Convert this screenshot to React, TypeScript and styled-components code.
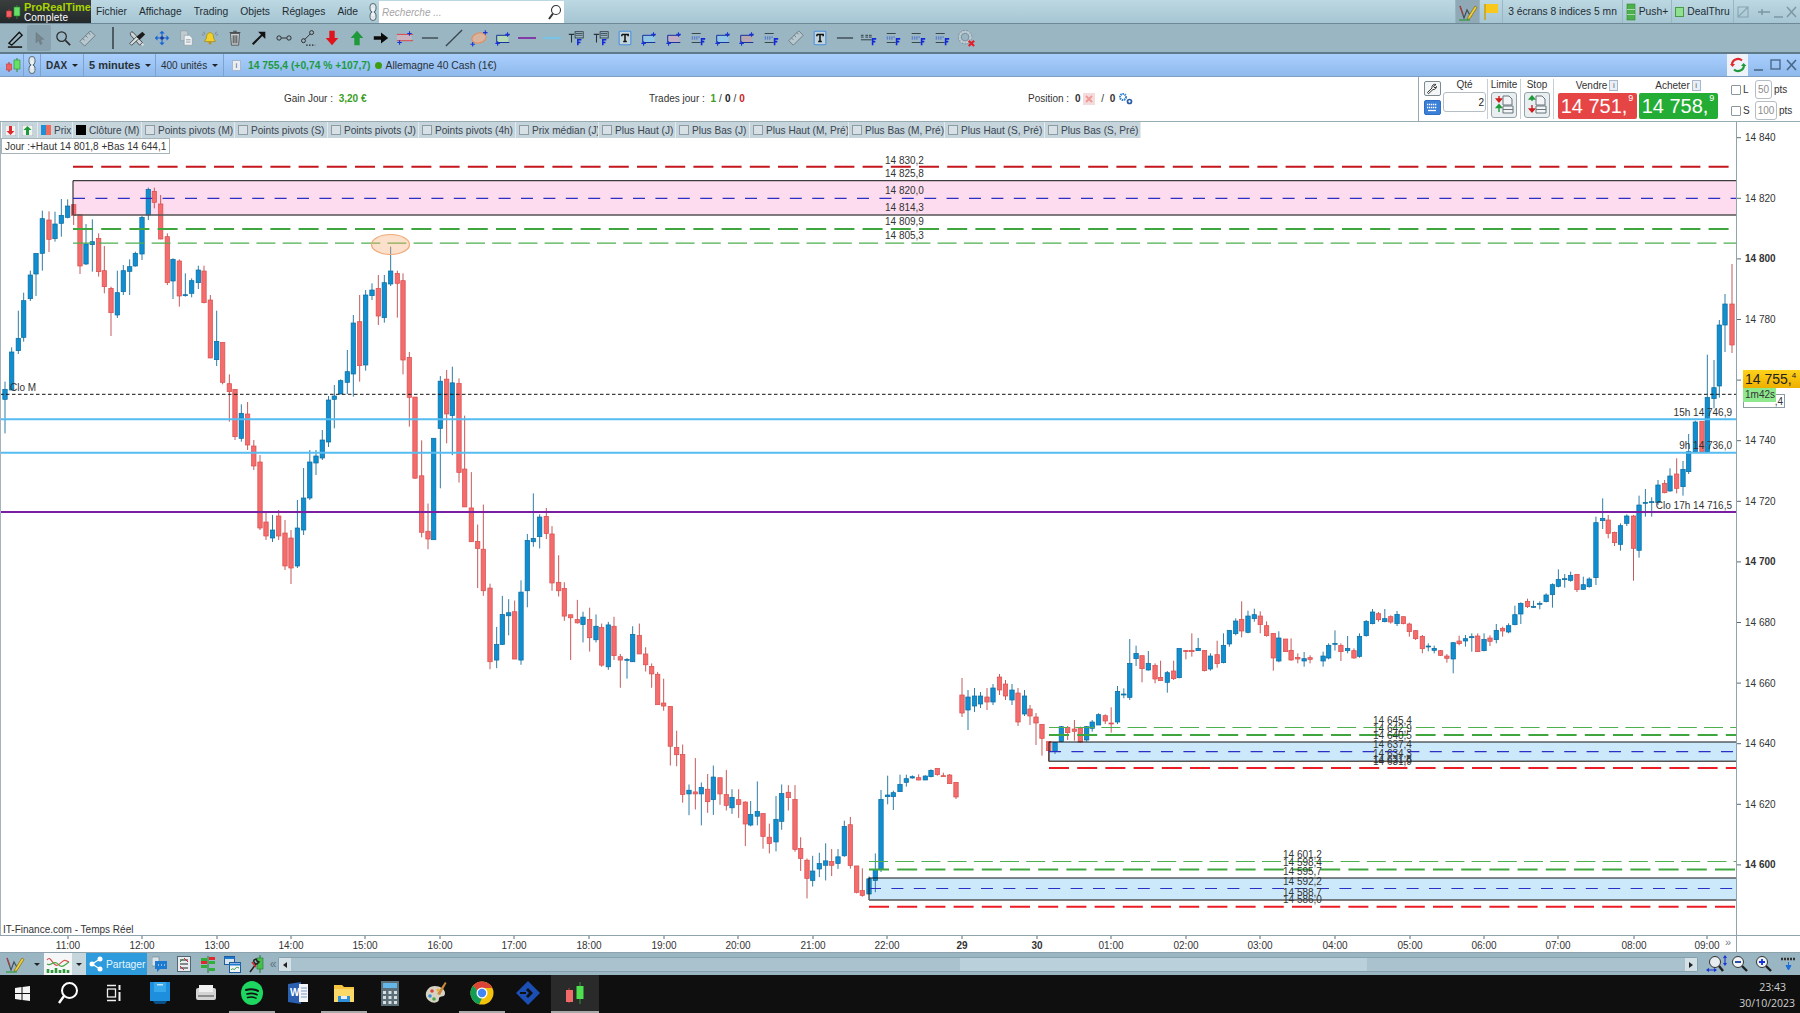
import React from "react";
import styled, { createGlobalStyle } from "styled-components";

const GlobalStyle = createGlobalStyle`
  html, body { margin: 0; padding: 0; background: #fff; }
  body { font-family: "Liberation Sans", Arial, sans-serif; font-size: 10px; color: #333; overflow: hidden; }
`;

/* ---------- candles: [x, bodyTop, bodyBottom, high, low, up] ---------- */
type Row = [number, number, number, number, number, number];
type Candle = { x: number; top: number; bottom: number; high: number; low: number; up: boolean };

const segment = (ox: number, oy: number, sx: number, sy: number, rows: Row[]): Candle[] =>
  rows.map(([x, t, b, h, l, u]) => ({
    x: ox + x / sx,
    top: oy + t / sy,
    bottom: oy + b / sy,
    high: oy + h / sy,
    low: oy + l / sy,
    up: u === 1,
  }));

const candles: Candle[] = [
  ...segment(0, 140, 3, 3, [
    [15, 748, 778, 725, 880, 1], [35, 636, 750, 622, 750, 1], [55, 595, 632, 512, 642, 1], [71, 482, 592, 458, 605, 1],
    [91, 405, 476, 392, 483, 1], [108, 340, 402, 340, 468, 1], [127, 236, 340, 212, 392, 1], [147, 240, 298, 214, 336, 0],
    [165, 252, 296, 215, 305, 1], [184, 226, 250, 177, 290, 1], [203, 198, 232, 178, 235, 1], [221, 194, 226, 194, 255, 0],
    [240, 224, 378, 224, 402, 0], [258, 312, 372, 252, 375, 1], [277, 305, 314, 238, 395, 1], [296, 295, 395, 280, 410, 0],
    [313, 392, 440, 318, 460, 0], [333, 445, 518, 440, 588, 0], [352, 458, 525, 392, 534, 1], [370, 392, 455, 375, 465, 1],
    [389, 380, 394, 358, 465, 1], [406, 340, 378, 335, 380, 1], [426, 232, 342, 228, 360, 1], [445, 148, 225, 143, 240, 1],
    [463, 154, 187, 143, 205, 0], [482, 192, 297, 165, 298, 0], [502, 290, 428, 280, 435, 0], [519, 358, 423, 355, 477, 1],
    [538, 363, 468, 358, 500, 0], [556, 464, 466, 400, 470, 1], [575, 422, 460, 415, 472, 1], [595, 390, 428, 377, 447, 1],
    [612, 393, 488, 377, 490, 0], [631, 480, 654, 465, 654, 0], [650, 604, 659, 512, 678, 1], [668, 607, 727, 607, 733, 0],
    [688, 731, 755, 703, 845, 0], [705, 748, 890, 748, 900, 0], [724, 820, 895, 793, 905, 1],
  ]),
  ...segment(0, 0, 1, 1, [
    [247.6, 414, 445, 402, 450, 0], [253.8, 446, 466, 440, 470, 0], [260, 462, 528, 455, 530, 0], [266, 522, 536, 512, 540, 0],
    [272.5, 530, 538, 515, 542, 1], [278.7, 516, 536, 510, 540, 0], [285, 533, 566, 520, 570, 0], [291, 538, 568, 530, 584, 0],
    [297.4, 528, 566, 500, 568, 1], [303.6, 498, 530, 468, 535, 1], [309.8, 462, 498, 450, 500, 1], [316, 456, 463, 450, 475, 1],
    [322.3, 440, 458, 430, 460, 1], [328.5, 400, 442, 396, 447, 1],
  ]),
  ...segment(0, 140, 3, 3, [
    [1003, 768, 778, 735, 865, 1], [1022, 722, 762, 718, 762, 1], [1042, 695, 727, 630, 762, 1], [1060, 549, 702, 525, 770, 1],
    [1079, 545, 677, 465, 725, 0], [1097, 465, 675, 450, 692, 1], [1116, 450, 467, 430, 480, 1], [1135, 445, 528, 405, 555, 0],
    [1153, 428, 533, 405, 548, 1], [1172, 393, 432, 320, 438, 1], [1192, 400, 430, 392, 533, 0], [1209, 422, 660, 400, 703, 0],
    [1228, 652, 772, 636, 860, 0],
  ]),
  ...segment(400, 370, 3, 2.958, [
    [45, 80, 320, 80, 322, 0], [65, 313, 480, 208, 495, 0], [84, 477, 500, 395, 530, 0], [101, 202, 502, 202, 502, 1],
    [121, 33, 173, 18, 350, 1], [140, 27, 130, 0, 217, 0], [157, 38, 135, -10, 252, 1], [177, 40, 303, 25, 333, 0],
    [194, 293, 405, 135, 405, 0], [214, 408, 508, 302, 508, 0], [233, 507, 528, 457, 645, 0], [250, 530, 653, 398, 668, 0],
    [270, 645, 863, 632, 885, 0], [290, 812, 858, 760, 882, 1], [307, 723, 812, 668, 812, 1], [326, 718, 727, 678, 785, 1],
    [344, 715, 855, 682, 855, 0], [363, 657, 858, 622, 872, 1], [382, 504, 653, 485, 702, 1], [400, 498, 508, 365, 523, 1],
    [419, 435, 493, 427, 528, 1], [439, 433, 484, 408, 500, 0], [456, 485, 630, 462, 653, 0], [476, 628, 653, 548, 670, 0],
    [493, 646, 728, 628, 742, 0], [512, 724, 733, 724, 858, 0], [532, 738, 748, 680, 750, 0], [549, 731, 753, 715, 806, 1],
    [569, 738, 792, 703, 833, 0], [588, 758, 798, 723, 806, 1], [605, 762, 873, 750, 878, 0], [625, 754, 878, 745, 887, 1],
    [642, 758, 845, 730, 858, 0], [661, 848, 858, 840, 940, 0], [681, 856, 858, 852, 913, 1], [698, 782, 863, 758, 863, 1],
    [718, 785, 840, 750, 840, 0], [737, 840, 872, 820, 892, 0], [755, 877, 899, 868, 940, 0], [773, 900, 990, 893, 990, 0],
    [791, 985, 994, 913, 1008, 0], [811, 995, 1113, 995, 1170, 0], [830, 1117, 1138, 1067, 1172, 0], [848, 1137, 1256, 1108, 1280, 0],
    [867, 1243, 1254, 1226, 1317, 1], [886, 1248, 1254, 1148, 1300, 0], [904, 1235, 1254, 1220, 1347, 1], [923, 1240, 1277, 1195, 1310, 0],
    [940, 1204, 1271, 1170, 1316, 1], [960, 1206, 1254, 1206, 1286, 0], [979, 1256, 1288, 1183, 1303, 0], [996, 1264, 1295, 1240, 1313, 1],
    [1016, 1271, 1285, 1240, 1325, 0], [1036, 1278, 1343, 1276, 1408, 0], [1052, 1315, 1346, 1275, 1350, 1], [1072, 1306, 1320, 1217, 1347, 1],
    [1089, 1312, 1380, 1312, 1416, 0], [1108, 1382, 1401, 1342, 1430, 0], [1128, 1329, 1396, 1260, 1424, 1], [1145, 1253, 1335, 1226, 1360, 1],
    [1165, 1249, 1265, 1228, 1303, 0], [1185, 1270, 1418, 1228, 1425, 0], [1202, 1415, 1445, 1382, 1482, 0], [1221, 1450, 1504, 1445, 1563, 0],
    [1238, 1482, 1510, 1437, 1528, 1], [1258, 1460, 1476, 1428, 1500, 1], [1277, 1452, 1465, 1400, 1510, 1], [1295, 1454, 1465, 1417, 1497, 0],
    [1314, 1440, 1460, 1417, 1476, 1], [1333, 1350, 1437, 1333, 1440, 1], [1351, 1345, 1466, 1322, 1475, 0], [1370, 1467, 1545, 1467, 1548, 0],
    [1387, 1540, 1554, 1474, 1558, 0], [1407, 1505, 1550, 1498, 1550, 1], [1426, 1478, 1510, 1430, 1545, 1],
  ]),
  ...segment(820, 760, 3, 3, [
    [183, 118, 328, 90, 336, 1], [203, 105, 110, 47, 133, 1], [220, 98, 110, 92, 150, 1], [240, 73, 95, 44, 95, 1], [259, 56, 67, 44, 80, 1],
    [277, 50, 54, 46, 56, 1], [296, 53, 60, 43, 61, 0], [316, 48, 60, 46, 60, 1], [333, 31, 50, 28, 52, 1],
    [352, 25, 44, 25, 47, 0], [370, 47, 49, 38, 49, 0], [389, 45, 71, 42, 71, 0], [408, 67, 111, 67, 117, 0],
  ]),
  ...segment(0, 0, 1, 1, [
    [962, 695, 713, 678, 717, 0], [968, 697, 710, 690, 730, 1], [974.5, 696, 706, 688, 712, 1], [980.5, 696, 704, 692, 708, 1],
    [987, 697, 702, 688, 710, 0], [993, 688, 702, 684, 705, 1], [999.5, 677, 690, 674, 695, 0], [1005.5, 684, 696, 680, 700, 0],
    [1012, 690, 700, 684, 705, 1], [1018, 693, 722, 688, 726, 0], [1024.5, 696, 714, 690, 716, 1], [1030, 709, 716, 705, 725, 0],
    [1036, 717, 723, 713, 745, 0],
  ]),
  ...segment(1040, 480, 2.529, 3, [
    [5, 733, 775, 733, 827, 0], [22, 785, 812, 785, 845, 0], [38, 788, 815, 788, 822, 1], [54, 740, 784, 738, 786, 1],
    [70, 742, 758, 738, 780, 0], [87, 747, 754, 720, 782, 0], [102, 744, 786, 740, 788, 0], [118, 740, 780, 738, 785, 1],
    [132, 726, 745, 720, 755, 1], [148, 704, 735, 700, 735, 1], [165, 707, 723, 703, 732, 0], [180, 729, 731, 682, 758, 0],
    [196, 634, 726, 618, 732, 1], [212, 642, 644, 625, 655, 1], [227, 550, 652, 477, 660, 1], [243, 520, 536, 497, 558, 1],
    [258, 527, 566, 527, 607, 0], [274, 550, 570, 513, 572, 1], [291, 556, 597, 550, 610, 0], [305, 592, 602, 542, 602, 0],
    [322, 578, 607, 573, 638, 1], [338, 573, 596, 542, 600, 0], [352, 505, 593, 505, 595, 1], [369, 511, 515, 511, 538, 0],
    [384, 511, 515, 460, 530, 0], [400, 505, 512, 474, 513, 1], [416, 511, 572, 511, 574, 0], [431, 528, 567, 520, 572, 1],
    [448, 524, 551, 482, 563, 0], [464, 496, 548, 460, 550, 1], [479, 451, 492, 450, 500, 1], [495, 423, 461, 415, 466, 1],
    [510, 418, 453, 364, 472, 0], [526, 408, 457, 392, 460, 1], [542, 404, 416, 386, 425, 1], [557, 408, 434, 394, 460, 0],
    [573, 437, 467, 424, 470, 0], [590, 460, 534, 460, 572, 0], [604, 474, 543, 454, 547, 1], [621, 477, 515, 477, 515, 0],
    [635, 511, 540, 475, 542, 0], [652, 532, 537, 520, 550, 0], [668, 536, 543, 516, 560, 1], [683, 533, 538, 526, 550, 0],
    [716, 528, 543, 515, 560, 1], [730, 496, 534, 490, 538, 1], [746, 490, 492, 451, 512, 1], [761, 496, 515, 490, 543, 0],
    [778, 505, 512, 468, 520, 1], [794, 512, 534, 505, 536, 0], [808, 469, 529, 460, 533, 1], [825, 424, 467, 420, 470, 1],
    [841, 396, 431, 387, 433, 1], [856, 401, 419, 396, 425, 0], [872, 416, 425, 387, 427, 1], [887, 410, 426, 406, 431, 0],
    [903, 403, 431, 393, 438, 1], [919, 410, 431, 410, 433, 0], [934, 432, 455, 428, 470, 0], [950, 452, 476, 450, 480, 0],
    [967, 469, 506, 465, 520, 0], [982, 498, 500, 490, 514, 1], [997, 505, 511, 497, 520, 1], [1013, 512, 526, 510, 528, 0],
    [1029, 528, 535, 522, 548, 0], [1045, 488, 537, 487, 580, 1], [1060, 483, 491, 467, 496, 0], [1076, 476, 483, 465, 500, 1],
    [1092, 470, 472, 460, 515, 1], [1107, 468, 515, 460, 516, 0], [1123, 478, 512, 460, 514, 1], [1138, 474, 484, 466, 498, 0],
    [1154, 451, 479, 432, 490, 1], [1170, 445, 453, 440, 470, 0], [1185, 437, 456, 430, 460, 1], [1201, 404, 434, 377, 436, 1],
    [1216, 370, 402, 367, 432, 1], [1233, 364, 380, 356, 384, 0], [1248, 379, 382, 362, 384, 1], [1264, 370, 373, 364, 388, 1],
    [1280, 345, 365, 340, 367, 1], [1296, 314, 344, 310, 383, 1], [1311, 298, 319, 268, 322, 1], [1327, 296, 299, 282, 323, 1],
    [1342, 286, 301, 275, 305, 1], [1358, 283, 329, 283, 336, 0], [1374, 314, 328, 290, 330, 1], [1389, 297, 320, 292, 323, 1],
    [1406, 128, 293, 110, 315, 1], [1423, 115, 122, 55, 147, 1], [1437, 120, 160, 105, 175, 0], [1453, 157, 188, 155, 198, 0],
    [1468, 137, 193, 130, 212, 1], [1484, 108, 130, 103, 138, 1], [1501, 108, 205, 105, 302, 0], [1515, 75, 211, 47, 233, 1],
    [1531, 67, 69, 27, 110, 1], [1547, 65, 66, 52, 110, 1],
  ]),
  ...segment(1600, 350, 3, 3, [
    [174, 405, 458, 390, 465, 1], [194, 400, 428, 390, 430, 0], [210, 378, 423, 355, 425, 1], [230, 372, 415, 325, 430, 0],
    [249, 358, 410, 333, 437, 1], [266, 305, 365, 252, 372, 1], [286, 216, 305, 212, 305, 1], [306, 214, 305, 214, 305, 0],
    [322, 142, 305, 14, 305, 1], [342, 113, 146, 30, 175, 1], [358, -75, 108, -90, 143, 1],
  ]),
  ...segment(0, 0, 1, 1, [[1725, 304, 325, 294, 352, 1], [1732, 304, 345, 264, 353, 0]]),
];

/* ---------- chart annotations ---------- */
const PLOT_RIGHT = 1736;

const zones = [
  { x: 73, top: 180.7, bottom: 215, fill: "#fcdcee" },
  { x: 1049, top: 742, bottom: 761.3, fill: "#cce9fb" },
  { x: 869, top: 878, bottom: 900, fill: "#cce9fb" },
];

const levels = [
  { x: 73, y: 166.7, color: "#c4161c", w: 2, dash: "20 8.2" },
  { x: 73, y: 198.3, color: "#2d2fc4", w: 1.2, dash: "12 10.4" },
  { x: 73, y: 229, color: "#3fa63f", w: 2, dash: "20 8.2" },
  { x: 73, y: 243.2, color: "#4eaf4e", w: 1.2, dash: "19 7.2" },
  { x: 1049, y: 727.5, color: "#4eaf4e", w: 1.2, dash: "19 7.2" },
  { x: 1049, y: 735, color: "#3fa63f", w: 2, dash: "20 8.2" },
  { x: 1049, y: 751.7, color: "#2d2fc4", w: 1.2, dash: "12 10.4" },
  { x: 1049, y: 768, color: "#ec1c24", w: 2, dash: "20 8.2" },
  { x: 869, y: 861.5, color: "#4eaf4e", w: 1.2, dash: "19 7.2" },
  { x: 869, y: 869.5, color: "#3fa63f", w: 2, dash: "20 8.2" },
  { x: 869, y: 888.5, color: "#2d2fc4", w: 1.2, dash: "12 10.4" },
  { x: 869, y: 906.7, color: "#ec1c24", w: 2, dash: "20 8.2" },
];

const fullLines = [
  { y: 419.3, color: "#55bdf2", w: 2 },
  { y: 452.7, color: "#55bdf2", w: 2 },
  { y: 512, color: "#7b1fa2", w: 2 },
];

const levelLabels: [number, number, string][] = [
  [885, 163.5, "14 830,2"], [885, 176.5, "14 825,8"], [885, 194, "14 820,0"], [885, 211, "14 814,3"], [885, 225, "14 809,9"], [885, 239, "14 805,3"],
  [1373, 723.5, "14 645,4"], [1373, 731.5, "14 642,9"], [1373, 738.5, "14 640,5"], [1373, 747.5, "14 637,4"], [1373, 756.5, "14 634,3"], [1373, 762.5, "14 631,8"], [1373, 764.5, "14 631,9"],
  [1283, 857.5, "14 601,2"], [1283, 865.5, "14 598,4"], [1283, 874.5, "14 595,7"], [1283, 884.5, "14 592,2"], [1283, 895.5, "14 588,7"], [1283, 902.5, "14 586,0"],
];

const priceTicks = [14840, 14820, 14800, 14780, 14760, 14740, 14720, 14700, 14680, 14660, 14640, 14620, 14600];
const priceY = (p: number) => 440.7 + (14740 - p) * 3.03;
const formatPrice = (p: number) => `${Math.floor(p / 1000)} ${String(p % 1000).padStart(3, "0")}`;

const timeTicks: [number, string, boolean?][] = [
  [68, "11:00"], [142, "12:00"], [217, "13:00"], [291, "14:00"], [365, "15:00"], [440, "16:00"], [514, "17:00"], [589, "18:00"],
  [664, "19:00"], [738, "20:00"], [813, "21:00"], [887, "22:00"], [962, "29", true], [1037, "30", true], [1111, "01:00"], [1186, "02:00"],
  [1260, "03:00"], [1335, "04:00"], [1410, "05:00"], [1484, "06:00"], [1558, "07:00"], [1634, "08:00"], [1707, "09:00"],
];

/* ---------- layout ---------- */
const Screen = styled.div`
  width: 1800px;
  height: 1013px;
  display: flex;
  flex-direction: column;
  background: #fff;
  overflow: hidden;
`;

const MenuBar = styled.div`
  height: 23px;
  display: flex;
  align-items: stretch;
  background: linear-gradient(#bcd8e2, #a6c6d3);
  border-bottom: 1px solid #6f8896;
`;

const Logo = styled.div`
  width: 91px;
  display: flex;
  align-items: center;
  gap: 3px;
  padding-left: 5px;
  box-sizing: border-box;
  background: linear-gradient(#3a3f3e, #23282a);
`;

const LogoText = styled.div`
  font-size: 10px;
  line-height: 10px;
  color: #fff;
  letter-spacing: 0.2px;
  b {
    display: block;
    font-size: 11px;
    color: #a8d400;
    line-height: 12px;
    letter-spacing: 0;
  }
`;

const MenuItems = styled.nav`
  display: flex;
  align-items: center;
  gap: 12px;
  padding-left: 5px;
  font-size: 10.3px;
  color: #1f2d33;
`;

const MenuChain = styled.span`
  display: flex;
  margin-left: -2px;
`;

const SearchBox = styled.div`
  width: 185px;
  margin: 1px 0 0 1px;
  background: #fff;
  display: flex;
  align-items: center;
  justify-content: space-between;
  padding: 0 2px 0 3px;
  box-sizing: border-box;
  font-style: italic;
  color: #a5a5a5;
`;

const Spacer = styled.div`
  flex: 1;
`;

const TopCell = styled.div<{ $width: number; $dark?: boolean }>`
  width: ${(p) => p.$width}px;
  display: flex;
  align-items: center;
  justify-content: center;
  gap: 3px;
  box-sizing: border-box;
  font-size: 10.3px;
  color: #1f2d33;
  border-left: 1px solid #9ab6c3;
  background: ${(p) => (p.$dark ? "#8fa9b6" : "transparent")};
`;

const ToolBar = styled.div`
  height: 28px;
  display: flex;
  align-items: center;
  padding-left: 3px;
  background: #9bb6c3;
  border-bottom: 2px solid #5f7a8a;
`;

const ToolCell = styled.div<{ $active?: boolean; $width?: number }>`
  width: ${(p) => p.$width ?? 24.4}px;
  height: 26px;
  flex: none;
  display: flex;
  align-items: center;
  justify-content: center;
  border-radius: 2px;
  background: ${(p) => (p.$active ? "#88a2af" : "transparent")};
`;

const ToolDivider = styled.div`
  width: 2px;
  height: 22px;
  margin: 0 11px 0 13px;
  background: #4d5c63;
`;

const SymbolBar = styled.div`
  height: 23px;
  display: flex;
  align-items: stretch;
  background: linear-gradient(#a9cffd, #8fb9ec);
  border-bottom: 1px solid #7f9fc2;
  box-sizing: border-box;
`;

const SymbolCell = styled.div<{ $width: number; $bold?: boolean; $size?: number; $pad?: number }>`
  width: ${(p) => p.$width}px;
  flex: none;
  box-sizing: border-box;
  display: flex;
  align-items: center;
  gap: 5px;
  padding-left: ${(p) => p.$pad ?? 5}px;
  font-size: ${(p) => p.$size ?? 10}px;
  font-weight: ${(p) => (p.$bold ? 700 : 400)};
  color: #2a3136;
  border-right: 1px solid #7fa2cd;
`;

const Caret = styled.span`
  width: 0;
  height: 0;
  border-left: 3px solid transparent;
  border-right: 3px solid transparent;
  border-top: 3px solid #1e2428;
`;

const QuoteLine = styled.div`
  display: flex;
  align-items: center;
  padding-left: 8px;
  font-size: 10.3px;
  color: #2a3136;
  gap: 4px;
`;

const InfoMark = styled.span<{ $flush?: boolean }>`
  width: 9px;
  height: 11px;
  margin-right: ${(p) => (p.$flush ? 0 : 3)}px;
  background: #e9eef5;
  border: 1px solid #a8b7c9;
  box-sizing: border-box;
  color: #5a6670;
  font-size: 8px;
  line-height: 9px;
  text-align: center;
`;

const QuoteValue = styled.b`
  color: #1f9a3a;
`;

const LiveDot = styled.span`
  width: 7px;
  height: 7px;
  border-radius: 50%;
  background: #3f9e10;
`;

const WindowButtons = styled.div`
  margin-left: auto;
  display: flex;
  align-items: center;
`;

const RefreshCell = styled.div`
  width: 21px;
  height: 22px;
  background: #eef3f9;
  display: flex;
  align-items: center;
  justify-content: center;
  margin-right: 4px;
`;

const OrderStrip = styled.div`
  height: 45px;
  display: grid;
  grid-template-columns: 284px 365px 379px 390px 1fr;
  background: #fff;
  border-bottom: 1px solid #97abb5;
  box-sizing: border-box;
`;

const Stat = styled.div<{ $col: number }>`
  grid-column: ${(p) => p.$col};
  display: flex;
  align-items: center;
  gap: 3px;
  color: #333;
  font-size: 10px;
  padding-bottom: 1px;
`;

const StatValue = styled.b<{ $color: string }>`
  color: ${(p) => p.$color};
`;

const OrderPanel = styled.div`
  grid-column: 5;
  display: flex;
  align-items: flex-start;
  border-left: 1px solid #97abb5;
  padding: 2px 0 0 3px;
  height: 44px;
  box-sizing: border-box;
`;

const OrderColumn = styled.div<{ $width: number; $rule?: boolean; $pad?: number; $offset?: number; $gap?: number }>`
  width: ${(p) => p.$width}px;
  flex: none;
  display: flex;
  flex-direction: column;
  align-items: center;
  gap: ${(p) => p.$gap ?? 2}px;
  font-size: 10px;
  line-height: 11px;
  color: #333;
  box-sizing: border-box;
  border-right: ${(p) => (p.$rule ? "1px solid #c5cfd5" : "none")};
  height: 40px;
  padding-left: ${(p) => p.$pad ?? 0}px;
  padding-top: ${(p) => p.$offset ?? 0}px;
`;

const SmallButton = styled.div<{ $blue?: boolean }>`
  width: 17px;
  height: 15px;
  border-radius: 2px;
  box-sizing: border-box;
  display: flex;
  align-items: center;
  justify-content: center;
  border: 1px solid ${(p) => (p.$blue ? "#2d6fc5" : "#7d8a92")};
  background: ${(p) => (p.$blue ? "#3a7fd8" : "#f3f5f6")};
`;

const QtyInput = styled.div`
  width: 43px;
  height: 20px;
  border: 1px solid #b4bec4;
  border-radius: 3px;
  box-sizing: border-box;
  text-align: right;
  padding: 4px 1px 0 0;
  color: #222;
`;

const TicketButton = styled.div`
  width: 26px;
  height: 26px;
  box-sizing: border-box;
  border: 1px solid #94a2aa;
  border-radius: 3px;
  background: #e9eef0;
  display: flex;
  align-items: center;
  justify-content: center;
`;

const LabelRow = styled.div`
  display: flex;
  align-items: center;
  gap: 2px;
  height: 12px;
`;

const PriceButton = styled.div<{ $color: string }>`
  width: 79px;
  height: 26px;
  border-radius: 2px;
  background: ${(p) => p.$color};
  color: #fff;
  display: flex;
  align-items: flex-start;
  justify-content: center;
  font-size: 20px;
  line-height: 26px;
  sup {
    font-size: 9px;
    line-height: 11px;
    margin-left: 1px;
  }
`;

const StopsColumn = styled.div`
  margin-left: 12px;
  display: flex;
  flex-direction: column;
  font-size: 10px;
  color: #333;
`;

const StopRow = styled.div`
  height: 21px;
  display: flex;
  align-items: center;
  gap: 2px;
`;

const StopName = styled.span`
  width: 10px;
`;

const CheckBox = styled.span`
  width: 10px;
  height: 10px;
  box-sizing: border-box;
  border: 1px solid #8b979e;
  background: #fff;
  border-radius: 1px;
`;

const PtsInput = styled.span<{ $width: number }>`
  width: ${(p) => p.$width}px;
  height: 19px;
  border: 1px solid #b4bec4;
  border-radius: 3px;
  box-sizing: border-box;
  color: #8c8c8c;
  text-align: center;
  line-height: 17px;
`;

const ChartPanel = styled.div`
  flex: 1;
  display: flex;
  min-height: 0;
`;

const Plot = styled.div`
  position: relative;
  width: 1737px;
  flex: none;
  box-sizing: border-box;
  border-right: 1px solid #8ea3ad;
  border-left: 1px solid #a5b4bb;
`;

const ChartSvg = styled.svg`
  display: block;
`;

const ChartText = styled.text`
  font-size: 10px;
  fill: #333;
`;

const LegendRow = styled.div`
  position: absolute;
  top: 0;
  left: 1px;
  height: 16px;
  display: flex;
  background: #b4c6d0;
  font-size: 10.1px;
  color: #3a4650;
`;

const LegendItem = styled.div<{ $width: number }>`
  width: ${(p) => p.$width}px;
  box-sizing: border-box;
  display: flex;
  align-items: center;
  gap: 2px;
  padding-left: 3px;
  white-space: nowrap;
  overflow: hidden;
  border-right: 1px solid #e3eaee;
  background: #c6d4dc;
`;

const LegendCheck = styled.span`
  width: 8px;
  height: 8px;
  flex: none;
  margin-right: 1px;
  border: 1px solid #8c9ba4;
  background: #d7e0e5;
`;

const Swatch = styled.span<{ $bg: string }>`
  width: 10px;
  height: 10px;
  flex: none;
  margin-right: 1px;
  background: ${(p) => p.$bg};
`;

const DayRange = styled.div`
  position: absolute;
  top: 16px;
  left: 0;
  width: 169px;
  height: 16px;
  line-height: 15px;
  padding-left: 3px;
  box-sizing: border-box;
  background: #fff;
  border: 1px solid #a5b4bb;
  color: #333;
  font-size: 10px;
  white-space: nowrap;
`;

const Feed = styled.div`
  position: absolute;
  left: 2px;
  bottom: 0;
  font-size: 10px;
  color: #333;
`;

const PriceAxis = styled.div`
  flex: 1;
  position: relative;
`;

const LastPriceTag = styled.div`
  position: absolute;
  left: 6px;
  top: 248px;
  width: 57px;
  height: 18px;
  background: linear-gradient(#ffd21a, #eeb000);
  font-size: 14px;
  line-height: 18px;
  padding-left: 2px;
  color: #222;
  box-sizing: border-box;
  white-space: nowrap;
  overflow: hidden;
  sup {
    font-size: 8px;
    line-height: 8px;
  }
`;

const GhostTag = styled.div`
  position: absolute;
  left: 6px;
  top: 272px;
  width: 42px;
  height: 14px;
  border: 1px solid #8d9aa2;
  box-sizing: border-box;
  background: #fff;
  text-align: right;
  line-height: 13px;
  font-size: 10px;
  padding-right: 1px;
`;

const TimerTag = styled.div`
  position: absolute;
  left: 6px;
  top: 266px;
  width: 33px;
  height: 14px;
  background: #8ee88e;
  line-height: 14px;
  font-size: 10px;
  padding-left: 2px;
  box-sizing: border-box;
`;

const TimeAxis = styled.div`
  height: 16px;
  position: relative;
  border-top: 1px solid #8ea3ad;
  background: #fff;
`;

const JumpMark = styled.div`
  position: absolute;
  left: 1720px;
  top: 0;
  width: 17px;
  height: 16px;
  box-sizing: border-box;
  border-right: 1px solid #8ea3ad;
  background: #fff;
  color: #6f7f88;
  font-size: 11px;
  line-height: 13px;
  text-align: center;
`;

const BottomBar = styled.div`
  height: 23px;
  display: flex;
  align-items: stretch;
  background: #9bb6c3;
  border-top: 1px solid #8ea3ad;
  box-sizing: border-box;
`;

const BottomCell = styled.div<{ $width: number; $bg?: string }>`
  width: ${(p) => p.$width}px;
  flex: none;
  display: flex;
  align-items: center;
  justify-content: center;
  background: ${(p) => p.$bg ?? "transparent"};
`;

const CollapseMark = styled.span`
  color: #5f7480;
  font-size: 12px;
`;

const ShareButton = styled.div`
  width: 61px;
  flex: none;
  display: flex;
  align-items: center;
  gap: 3px;
  padding-left: 3px;
  box-sizing: border-box;
  background: #2d9bdc;
  color: #e8f5fc;
  font-size: 10.3px;
`;

const ScrollTrack = styled.div`
  flex: 1;
  margin: 4px 6px 3px 0;
  display: flex;
  background: #a9c2ce;
  border: 1px solid #87a0ad;
  border-radius: 2px;
  align-items: stretch;
`;

const ScrollArrow = styled.div<{ $dir: "left" | "right" }>`
  width: 12px;
  flex: none;
  display: flex;
  align-items: center;
  justify-content: center;
  background: #d3e0e6;
  &::before {
    content: "";
    border-top: 3px solid transparent;
    border-bottom: 3px solid transparent;
    ${(p) => (p.$dir === "left" ? "border-right: 4px solid #222;" : "border-left: 4px solid #222;")}
  }
`;

const ScrollGap = styled.div<{ $width?: number }>`
  flex: ${(p) => (p.$width ? `0 0 ${p.$width}px` : 1)};
`;

const ScrollThumb = styled.div`
  flex: 0 0 407px;
  background: #bad0da;
`;

const Taskbar = styled.div`
  height: 38px;
  display: flex;
  align-items: stretch;
  background: #0f0f0f;
  box-sizing: border-box;
`;

const TaskIcon = styled.div<{ $width?: number; $running?: boolean; $active?: boolean }>`
  width: ${(p) => p.$width ?? 46}px;
  flex: none;
  display: flex;
  align-items: center;
  justify-content: center;
  box-sizing: border-box;
  background: ${(p) => (p.$active ? "#2a2a2a" : "transparent")};
  border-bottom: 2px solid ${(p) => (p.$running ? "#a8a8a8" : "transparent")};
`;

const Clock = styled.div`
  margin-left: auto;
  padding: 4px 5px 0 0;
  text-align: right;
  color: #cfcfcf;
  font-family: "Open Sans", "Liberation Sans", sans-serif;
  font-size: 10.5px;
  line-height: 16px;
`;

const ClockTime = styled.div`
  padding-right: 9px;
`;

/* ---------- icons ---------- */
const Glyph = ({ size = 18, box = 20, children }: { size?: number; box?: number; children: React.ReactNode }) => (
  <svg width={size} height={size} viewBox={`0 0 ${box} ${box}`} fill="none">
    {children}
  </svg>
);

const Plus = ({ x, y, c = "#1433d8" }: { x: number; y: number; c?: string }) => (
  <path d={`M${x - 2.5} ${y}h5M${x} ${y - 2.5}v5`} stroke={c} strokeWidth="1.2" />
);

const LinesF = () => (
  <>
    <path d="M3 5h10M3 15h10" stroke="#38464e" strokeWidth="1.2" />
    <path d="M3 9h10M3 11h7" stroke="#2b55d8" strokeWidth="1" strokeDasharray="1.5 1" />
    <path d="M14 18v-7h4M14 14h3" stroke="#1028d8" strokeWidth="1.8" />
  </>
);

const BoxTool = ({ fill }: { fill: string }) => (
  <>
    <rect x="3" y="7" width="13" height="8" fill={fill} />
    <path d="M3 7h14M3 15h14M3 7v8" stroke="#16309c" strokeWidth="1.1" />
    <Plus x={15} y={6} />
    <Plus x={4} y={16} />
  </>
);

const TextBox = () => (
  <>
    <rect x="3.5" y="2.5" width="13" height="15" rx="1" fill="#c3d5dc" stroke="#4a8ee0" strokeWidth="1.2" />
    <path d="M6.5 6h7v2M10 6v8M8 14h4M6.5 8V6" stroke="#111" strokeWidth="1.7" />
  </>
);

const Ruler = () => (
  <>
    <path d="M2 13L13 2l5 5L7 18z" fill="#b8c8cf" stroke="#69787f" />
    <path d="M5 10l2 2M8 7l2 2M11 4l2 2" stroke="#69787f" />
  </>
);

const toolGlyphs: Record<string, React.ReactNode> = {
  pencil: (
    <>
      <path d="M3 15L14 3.5l3 3L6 17z" fill="none" stroke="#111" strokeWidth="1.4" />
      <path d="M2 19h15" stroke="#111" strokeWidth="1.6" />
    </>
  ),
  cursor: <path d="M6 3l0 12 3-3 2 5 2-1-2-5 4 0z" fill="#78868d" stroke="#5e6b72" strokeWidth=".5" />,
  mag: (
    <>
      <circle cx="8" cy="8" r="5" stroke="#2b2b2b" strokeWidth="1.3" />
      <path d="M12 12l5 5" stroke="#2b2b2b" strokeWidth="1.8" />
    </>
  ),
  ruler: <Ruler />,
  tools: (
    <>
      <path d="M3 4l14 14" stroke="#d6dde0" strokeWidth="2.4" />
      <path d="M4 3a3 3 0 0 0-1 4l10 11 3-3L6 4z" fill="#ccd4d8" stroke="#222" strokeWidth=".8" />
      <path d="M9 9l7-6 3 3-6 6z" fill="#1b1b1b" />
      <path d="M12 11l-8 7-2-2 7-7" fill="#d9e0e3" stroke="#222" strokeWidth=".8" />
    </>
  ),
  move: (
    <>
      <path d="M10 2l3 3h-6zM10 18l3-3h-6zM2 10l3-3v6zM18 10l-3-3v6z" fill="#1565d8" />
      <path d="M10 4v12M4 10h12" stroke="#1565d8" strokeWidth="1.2" />
      <circle cx="10" cy="10" r="2" fill="#173a9c" />
    </>
  ),
  copy: (
    <>
      <path d="M4 2h7l1 2v9H4z" fill="#bfcbd1" stroke="#8b989e" strokeWidth=".7" />
      <path d="M8 7h6l3 3v8H8z" fill="#eef2f4" stroke="#8b989e" strokeWidth=".7" />
      <path d="M10 12h5M10 14.5h5" stroke="#8b989e" />
    </>
  ),
  bell: (
    <>
      <path d="M10 4c-3 0-4 3-4 6l-2 4h12l-2-4c0-3-1-6-4-6z" fill="#f2d12c" stroke="#a08a10" strokeWidth=".8" />
      <circle cx="10" cy="15.5" r="1.6" fill="#c28e10" />
      <path d="M3 3l1 3M17 3l-1 3M1 6l2 1M19 6l-2 1" stroke="#6d7a80" strokeWidth=".9" />
    </>
  ),
  trash: (
    <>
      <path d="M5 5h10l-1 13H6z" fill="#c7cfd2" stroke="#444" strokeWidth=".9" />
      <path d="M4 4h12M8 2.5h4M8 7v9M10 7v9M12 7v9" stroke="#444" strokeWidth="1.1" />
    </>
  ),
  arrow: (
    <>
      <path d="M3 17L14 6" stroke="#111" strokeWidth="2.2" />
      <path d="M9 3h8v8z" fill="#111" />
    </>
  ),
  nodes: (
    <>
      <circle cx="4.5" cy="10" r="2.4" stroke="#222" />
      <circle cx="15.5" cy="10" r="2.4" stroke="#222" />
      <path d="M7 10h6" stroke="#222" />
    </>
  ),
  nodesDots: (
    <>
      <circle cx="5" cy="13" r="2.2" stroke="#222" />
      <circle cx="14" cy="4" r="2.2" stroke="#222" />
      <path d="M6.5 11.5l6-6" stroke="#222" />
      <path d="M8 18h10" stroke="#222" strokeWidth="1.4" strokeDasharray="1.6 1.6" />
    </>
  ),
  down: <path d="M7 2h6v8h4l-7 8-7-8h4z" fill="#e0141c" />,
  up: <path d="M10 2l7 8h-4v8H7v-8H3z" fill="#1e9a3a" />,
  right: <path d="M2 8h8V4l8 6-8 6v-4H2z" fill="#0b0b0b" />,
  channel: (
    <>
      <rect x="1" y="6" width="16" height="7" fill="#c9b4c0" />
      <path d="M1 6h18M1 13h18" stroke="#d6484c" strokeWidth="1.1" />
      <Plus x={15} y={5} />
      <Plus x={4} y={15} />
    </>
  ),
  hline: <path d="M1 10h18" stroke="#38464e" strokeWidth="1.5" />,
  diag: <path d="M1 19L19 1" stroke="#38464e" strokeWidth="1.5" />,
  ellipse: (
    <>
      <ellipse cx="10" cy="10" rx="8" ry="5.5" transform="rotate(-15 10 10)" fill="#d8b4a0" stroke="#e68a52" strokeWidth="1.1" />
      <Plus x={17} y={4} />
      <Plus x={3} y={17} />
    </>
  ),
  rectGreen: <BoxTool fill="#b4d8b4" />,
  purple: <path d="M0 10h20" stroke="#7b1fa2" strokeWidth="1.8" />,
  cyan: <path d="M0 10h20" stroke="#6cc6ee" strokeWidth="1.8" />,
  textF: (
    <>
      <path d="M2 6h6M5 6v9" stroke="#26343c" strokeWidth="1.2" />
      <rect x="9" y="3" width="9" height="7" fill="none" stroke="#26343c" strokeWidth=".9" />
      <path d="M10 5h7M10 7h7" stroke="#26343c" strokeWidth=".8" />
      <path d="M12 18v-6h4M12 15h3" stroke="#1028d8" strokeWidth="1.7" />
    </>
  ),
  linesF: <LinesF />,
  textBox: <TextBox />,
  rectBlue: <BoxTool fill="#8fc7e4" />,
  rectMauve: <BoxTool fill="#c0aec4" />,
  rectGrey: <BoxTool fill="#b6a8b0" />,
  ruler2: <Ruler />,
  numF: (
    <>
      <path d="M1 7h3M6 7h3M10 7h3M1 9h3M6 9h3M10 9h3" stroke="#26343c" strokeWidth="1" />
      <path d="M1 12h12" stroke="#26343c" strokeWidth="1" />
      <path d="M14 18v-7h4M14 14h3" stroke="#1028d8" strokeWidth="1.8" />
    </>
  ),
  wheel: (
    <>
      <circle cx="9" cy="9" r="7.5" stroke="#728590" strokeWidth=".8" />
      <circle cx="9" cy="9" r="6" stroke="#c3d0d6" strokeWidth="2.6" strokeDasharray="2.2 .8" />
      <circle cx="9" cy="9" r="4.2" stroke="#728590" strokeWidth=".8" />
      <path d="M13 13l6 6M19 13l-6 6" stroke="#e0202a" strokeWidth="2.4" />
    </>
  ),
};

const leftTools = ["pencil", "cursor", "mag", "ruler"];
const drawTools = [
  "tools", "move", "copy", "bell", "trash", "arrow", "nodes", "nodesDots", "down", "up", "right", "channel", "hline", "diag",
  "ellipse", "rectGreen", "purple", "cyan", "textF", "textF", "textBox", "rectBlue", "rectMauve", "linesF", "rectBlue", "rectGrey",
  "linesF", "ruler2", "textBox", "hline", "numF", "linesF", "linesF", "linesF", "wheel",
];

const ChainIcon = () => (
  <svg width="10" height="20" viewBox="0 0 10 20" fill="none">
    <rect x="2" y="1.5" width="6" height="8.5" rx="3" fill="#dfe8ec" stroke="#5a6a72" />
    <rect x="2" y="10" width="6" height="8.5" rx="3" fill="#dfe8ec" stroke="#5a6a72" />
    <path d="M5 6v8" stroke="#f2f6f8" strokeWidth="1.6" />
  </svg>
);

const CandlesIcon = () => (
  <svg width="16" height="16" viewBox="0 0 16 16" fill="none">
    <path d="M4 5v10" stroke="#a83030" />
    <rect x="1.5" y="7" width="5" height="6" fill="#f06060" stroke="#c83a3a" strokeWidth=".6" />
    <path d="M12 1v14" stroke="#2e8a2e" />
    <rect x="9" y="3" width="6" height="9" fill="#66e066" stroke="#2e8a2e" strokeWidth=".6" />
  </svg>
);

const MarkerIcon = () => (
  <svg width="20" height="18" viewBox="0 0 20 18" fill="none">
    <path d="M2 3l4 12 3-8 4 7" stroke="#3f5058" strokeWidth="1.2" />
    <path d="M2 3l3 8" stroke="#b33a3a" strokeWidth="1.2" />
    <path d="M10 14L17 3l2 1.5-7 11-3 1z" fill="#f2cf3a" stroke="#7d6a10" strokeWidth=".7" />
    <path d="M1 17h11" stroke="#2f9a3a" strokeWidth="1.2" />
  </svg>
);

const GreenBarsIcon = () => (
  <svg width="10" height="18" viewBox="0 0 10 18">
    <rect x="1" y="1" width="8" height="16" fill="#4db04d" stroke="#2f8a2f" strokeWidth=".6" />
    <path d="M1 6.5h8M1 11.5h8" stroke="#a9d8a9" />
  </svg>
);

const MiniChartIcon = () => (
  <svg width="24" height="20" viewBox="0 0 24 20" fill="none">
    <path d="M1 6c4-6 6 8 11 5s5-7 11-3" stroke="#d9534f" strokeWidth="1.2" />
    <path d="M1 10c4 3 7-5 11 0s6 1 11-2" stroke="#46a846" strokeWidth="1.2" />
    <path d="M2 19v-4M6 19v-3M10 19v-5M14 19v-3M18 19v-4M22 19v-3" stroke="#2f9a3a" strokeWidth="2.6" />
  </svg>
);

const TaskWindows = () => (
  <svg width="15" height="15" viewBox="0 0 15 15" fill="#f4f4f4">
    <path d="M0 2l6.5-1v6H0zM7.5 1L15 0v7H7.5zM0 8h6.5v6L0 13zM7.5 8H15v7l-7.5-1z" />
  </svg>
);

const TaskSearch = () => (
  <svg width="22" height="24" viewBox="0 0 22 24" fill="none">
    <circle cx="12.5" cy="9.5" r="7.5" stroke="#fff" strokeWidth="2" />
    <path d="M7 15l-5 7" stroke="#fff" strokeWidth="2.4" />
  </svg>
);

const TaskView = () => (
  <svg width="16" height="18" viewBox="0 0 16 18" fill="none">
    <path d="M1 1.5h9M1 16.5h9" stroke="#f0f0f0" strokeWidth="1.4" />
    <rect x="1.5" y="5" width="8" height="8" stroke="#f0f0f0" strokeWidth="1.3" />
    <path d="M13.5 1v5M13.5 8v9" stroke="#f0f0f0" strokeWidth="2" />
  </svg>
);

const taskIcons: { key: string; node: React.ReactNode; running?: boolean; active?: boolean; width?: number }[] = [
  {
    key: "store",
    node: (
      <svg width="22" height="24" viewBox="0 0 22 24">
        <rect x="1" y="1" width="20" height="19" fill="#1d8fdc" />
        <rect x="5" y="1" width="12" height="10" fill="#38a8ec" />
        <path d="M4 20h14l-2 3H6z" fill="#0a4f86" />
        <rect x="8" y="3" width="6" height="1.5" fill="#bfe2f8" />
      </svg>
    ),
  },
  {
    key: "printer",
    node: (
      <svg width="22" height="16" viewBox="0 0 22 16">
        <rect x="1" y="3" width="20" height="12" rx="2" fill="#d4d4d4" />
        <rect x="4" y="0" width="14" height="7" fill="#f0f0f0" />
        <rect x="3" y="10" width="16" height="2" fill="#8f8f8f" />
      </svg>
    ),
  },
  {
    key: "spotify",
    running: true,
    node: (
      <svg width="22" height="24" viewBox="0 0 22 24" fill="none">
        <ellipse cx="11" cy="12" rx="11" ry="12" fill="#1ed760" />
        <path d="M5 9c4-1.2 8-1 12 1" stroke="#111" strokeWidth="2" strokeLinecap="round" />
        <path d="M6 13c3.5-1 7-.8 10 .8" stroke="#111" strokeWidth="1.7" strokeLinecap="round" />
        <path d="M6.500 16.500c3-.8 6-.6 8.500.7" stroke="#111" strokeWidth="1.4" strokeLinecap="round" />
      </svg>
    ),
  },
  {
    key: "word",
    node: (
      <svg width="22" height="24" viewBox="0 0 22 24">
        <path d="M1 3l13-2v22L1 21z" fill="#2c5fb0" />
        <rect x="12" y="3" width="9" height="18" fill="#f4f6fa" />
        <path d="M14 7h6M14 10h6M14 13h6M14 16h6" stroke="#7f9ac8" />
        <text x="3" y="15" fontSize="10" fontWeight="700" fill="#fff">W</text>
      </svg>
    ),
  },
  {
    key: "folder",
    running: true,
    node: (
      <svg width="22" height="20" viewBox="0 0 22 20">
        <path d="M1 2h8l2 2h10v15H1z" fill="#f5c542" />
        <rect x="1" y="6" width="20" height="13" fill="#fbd968" />
        <rect x="5" y="13" width="12" height="6" fill="#2f8fd8" />
        <rect x="8" y="13" width="6" height="3" fill="#e8eef4" />
      </svg>
    ),
  },
  {
    key: "calc",
    node: (
      <svg width="18" height="25" viewBox="0 0 18 25">
        <rect width="18" height="25" fill="#5c6f78" />
        <rect x="2" y="2" width="14" height="5" fill="#63b8e8" />
        <path d="M2 10h3v3H2zM7.5 10h3v3h-3zM13 10h3v3h-3zM2 15h3v3H2zM7.5 15h3v3h-3zM13 15h3v3h-3zM2 20h3v3H2zM7.5 20h3v3h-3zM13 20h3v3h-3z" fill="#d7dee2" />
      </svg>
    ),
  },
  {
    key: "palette",
    node: (
      <svg width="22" height="24" viewBox="0 0 22 24">
        <path d="M10 5C4 5 0 10 1 15c1 5 7 8 11 6 3-1 1-4 3-5s5 0 5-4c0-4-5-7-10-7z" fill="#d7d2c4" />
        <circle cx="7" cy="10" r="1.8" fill="#d9453c" />
        <circle cx="5" cy="15" r="1.8" fill="#3a8fd8" />
        <circle cx="9" cy="18" r="1.8" fill="#49a84a" />
        <circle cx="13" cy="9" r="1.6" fill="#e8b030" />
        <path d="M12 13L20 1l1.5 1L15 14z" fill="#c98a3c" />
      </svg>
    ),
  },
  {
    key: "chrome",
    running: true,
    node: (
      <svg width="24" height="24" viewBox="0 0 24 24">
        <circle cx="12" cy="12" r="11.5" fill="#f4c20d" />
        <path d="M12 .5A11.5 11.5 0 0 1 22.200 7H12a5 5 0 0 0-4.500 3L3.300 4.500A11.500 11.500 0 0 1 12 .5z" fill="#db4437" />
        <path d="M3.300 4.500L7.500 10a5 5 0 0 0 4.500 7l-2.800 6.200A11.500 11.500 0 0 1 3.300 4.500z" fill="#0f9d58" />
        <circle cx="12" cy="12" r="5.5" fill="#fff" />
        <circle cx="12" cy="12" r="4.2" fill="#4285f4" />
      </svg>
    ),
  },
  {
    key: "diamond",
    node: (
      <svg width="24" height="24" viewBox="0 0 24 24">
        <path d="M12 0l12 12-12 12L0 12z" fill="#1c4fb4" />
        <path d="M12 7l5 5-5 5-2-2 3-3-3-3z" fill="#0f0f0f" />
        <path d="M4 11h6v2H4z" fill="#0f0f0f" />
      </svg>
    ),
  },
  {
    key: "prt",
    running: true,
    active: true,
    width: 48,
    node: (
      <svg width="20" height="24" viewBox="0 0 20 24">
        <path d="M4 7v15" stroke="#b04040" />
        <rect x="1" y="9" width="7" height="12" fill="#f06a6a" />
        <path d="M15 1v22" stroke="#2e9a2e" />
        <rect x="11.5" y="5" width="7" height="13" fill="#4fe04f" />
      </svg>
    ),
  },
];

const legendItems: [string, number][] = [
  ["Points pivots (M)", 93], ["Points pivots (S)", 93], ["Points pivots (J)", 91], ["Points pivots (4h)", 97], ["Prix médian (J)", 83],
  ["Plus Haut (J)", 77], ["Plus Bas (J)", 74], ["Plus Haut (M, Pré)", 99], ["Plus Bas (M, Pré)", 96], ["Plus Haut (S, Pré)", 100], ["Plus Bas (S, Pré)", 96],
];

/* ---------- chart ---------- */
function CandleChart() {
  return (
    <ChartSvg width={1735} height={814} viewBox="1 122 1735 814">
      {zones.map((z) => (
        <rect key={z.top} x={z.x} y={z.top} width={PLOT_RIGHT - z.x} height={z.bottom - z.top} fill={z.fill} />
      ))}
      {candles.map((c, i) => (
        <g key={i}>
          <line x1={c.x} x2={c.x} y1={c.high} y2={c.low} stroke={c.up ? "#2f7ea6" : "#c45a5a"} strokeWidth="1" />
          <rect
            x={c.x - 2.2}
            y={c.top}
            width="4.4"
            height={Math.max(c.bottom - c.top, 1)}
            fill={c.up ? "#0f8fd0" : "#f46c6c"}
            stroke={c.up ? "#0c6a9f" : "#d84e4e"}
            strokeWidth=".7"
          />
        </g>
      ))}
      {zones.map((z) => (
        <g key={z.top}>
          <path d={`M${PLOT_RIGHT} ${z.top}H${z.x}V${z.bottom}`} stroke="#111" strokeWidth="1" fill="none" />
          <path d={`M${z.x} ${z.bottom}H${PLOT_RIGHT}`} stroke="#555" strokeWidth="1.4" fill="none" />
        </g>
      ))}
      {levels.map((l) => (
        <line key={l.y} x1={l.x} x2={PLOT_RIGHT} y1={l.y} y2={l.y} stroke={l.color} strokeWidth={l.w} strokeDasharray={l.dash} />
      ))}
      <line x1="0" x2={PLOT_RIGHT} y1="394.3" y2="394.3" stroke="#111" strokeWidth="1" strokeDasharray="3.5 2.5" />
      {fullLines.map((l) => (
        <line key={l.y} x1="0" x2={PLOT_RIGHT} y1={l.y} y2={l.y} stroke={l.color} strokeWidth={l.w} />
      ))}
      <ellipse cx="390.5" cy="244.5" rx="19" ry="10" fill="#f5a76a" fillOpacity=".35" stroke="#f0a878" strokeWidth="1.2" />
      <ChartText x="10" y="391">Clo M</ChartText>
      {levelLabels.map(([x, y, t]) => (
        <ChartText key={`${t}${y}`} x={x} y={y}>{t}</ChartText>
      ))}
      <ChartText x="1732" y="415.5" textAnchor="end">15h 14 746,9</ChartText>
      <ChartText x="1732" y="449" textAnchor="end">9h 14 736,0</ChartText>
      <ChartText x="1732" y="508.5" textAnchor="end">Clo 17h 14 716,5</ChartText>
    </ChartSvg>
  );
}

export default function App() {
  return (
    <Screen>
      <GlobalStyle />
      <MenuBar>
        <Logo>
          <CandlesIcon />
          <LogoText>
            <b>ProRealTime</b>
            Complete
          </LogoText>
        </Logo>
        <MenuItems>
          <span>Fichier</span>
          <span>Affichage</span>
          <span>Trading</span>
          <span>Objets</span>
          <span>Réglages</span>
          <span>Aide</span>
          <MenuChain>
            <ChainIcon />
          </MenuChain>
        </MenuItems>
        <SearchBox>
          Recherche ...
          <svg width="15" height="16" viewBox="0 0 15 16" fill="none">
            <circle cx="9" cy="6" r="4.5" stroke="#333" strokeWidth="1.1" />
            <path d="M6 9.5L2 15" stroke="#333" strokeWidth="2" />
          </svg>
        </SearchBox>
        <Spacer />
        <TopCell $width={24} $dark>
          <MarkerIcon />
        </TopCell>
        <TopCell $width={23}>
          <svg width="16" height="18" viewBox="0 0 16 18">
            <path d="M2 1h13v9H2z" fill="#f8c81c" />
            <path d="M2 1v16" stroke="#caa010" strokeWidth="1.5" />
          </svg>
        </TopCell>
        <TopCell $width={120}>3 écrans 8 indices 5 mn</TopCell>
        <TopCell $width={49}>
          <GreenBarsIcon />
          Push+
        </TopCell>
        <TopCell $width={62}>
          <svg width="9" height="10" viewBox="0 0 9 10">
            <rect x=".5" y=".5" width="8" height="9" fill="#8fe08f" stroke="#4a9a4a" />
          </svg>
          DealThru
        </TopCell>
        <TopCell $width={67}>
          <svg width="62" height="14" viewBox="0 0 62 14" fill="none">
            <path d="M2 12L12 2M2 2h10v10H2z" stroke="#88a3b0" strokeWidth="1.1" />
            <path d="M22 7h10M26 4v6M32 7h2" stroke="#7c97a4" strokeWidth="1.5" />
            <path d="M38 12h9" stroke="#7c97a4" strokeWidth="1.5" />
            <path d="M51 2l9 10M60 2l-9 10" stroke="#7c97a4" strokeWidth="1.5" />
          </svg>
        </TopCell>
      </MenuBar>

      <ToolBar>
        {leftTools.map((name) => (
          <ToolCell key={name} $active={name === "cursor"} $width={24}>
            <Glyph size={name === "cursor" ? 17 : 19}>{toolGlyphs[name]}</Glyph>
          </ToolCell>
        ))}
        <ToolDivider />
        {drawTools.map((name, i) => (
          <ToolCell key={`${name}${i}`}>
            <Glyph>{toolGlyphs[name]}</Glyph>
          </ToolCell>
        ))}
      </ToolBar>

      <SymbolBar>
        <SymbolCell $width={24}>
          <CandlesIcon />
        </SymbolCell>
        <SymbolCell $width={17} $pad={3}>
          <ChainIcon />
        </SymbolCell>
        <SymbolCell $width={43} $bold>
          DAX
          <Caret />
        </SymbolCell>
        <SymbolCell $width={72} $bold $size={11}>
          5 minutes
          <Caret />
        </SymbolCell>
        <SymbolCell $width={68}>
          400 unités
          <Caret />
        </SymbolCell>
        <QuoteLine>
          <InfoMark>i</InfoMark>
          <QuoteValue>14 755,4 (+0,74 % +107,7)</QuoteValue>
          <LiveDot />
          Allemagne 40 Cash (1€)
        </QuoteLine>
        <WindowButtons>
          <RefreshCell>
            <svg width="18" height="18" viewBox="0 0 18 18" fill="none">
              <path d="M3 9a6 6 0 0 1 10-4.5" stroke="#e0282e" strokeWidth="2.2" />
              <path d="M1 8l2.5 3L6 8z" fill="#e0282e" />
              <path d="M15 9a6 6 0 0 1-10 4.5" stroke="#1e9a3a" strokeWidth="2.2" />
              <path d="M12 10l2.5-3 3 3z" fill="#1e9a3a" />
            </svg>
          </RefreshCell>
          <svg width="48" height="16" viewBox="0 0 48 16" fill="none">
            <path d="M2 13h9" stroke="#4a6a8a" strokeWidth="1.6" />
            <rect x="19" y="3" width="9" height="9" stroke="#4a6a8a" strokeWidth="1.4" />
            <path d="M35 3l9 10M44 3l-9 10" stroke="#4a6a8a" strokeWidth="1.7" />
          </svg>
        </WindowButtons>
      </SymbolBar>

      <OrderStrip>
        <Stat $col={2}>
          Gain Jour :&nbsp;
          <StatValue $color="#3a9e1e">3,20 €</StatValue>
        </Stat>
        <Stat $col={3}>
          Trades jour :&nbsp;
          <StatValue $color="#3a9e1e">1</StatValue> / <StatValue $color="#222">0</StatValue> / <StatValue $color="#c81e1e">0</StatValue>
        </Stat>
        <Stat $col={4}>
          Position :&nbsp;<b>0</b>
          <svg width="12" height="12" viewBox="0 0 12 12">
            <rect width="12" height="12" fill="#f4dcdc" />
            <path d="M3 3l6 6M9 3l-6 6" stroke="#f09a9a" strokeWidth="2" />
          </svg>
          &nbsp;/&nbsp;<b>0</b>
          <svg width="15" height="13" viewBox="0 0 15 13" fill="none">
            <circle cx="5" cy="5" r="3" stroke="#2f7fd0" strokeWidth="2" strokeDasharray="1.5 .7" />
            <circle cx="11.5" cy="9.5" r="2" stroke="#2a5fa8" strokeWidth="1.7" />
          </svg>
        </Stat>
        <OrderPanel>
          <OrderColumn $width={20} $offset={2} $gap={4}>
            <SmallButton>
              <svg width="12" height="12" viewBox="0 0 12 12" fill="none">
                <path d="M10 1.5a3 3 0 0 0-4 3.5L1.500 9.500l1 1.200L7 6.500a3 3 0 0 0 3.500-3L9 5 7.500 3.500z" stroke="#222" strokeWidth=".9" />
              </svg>
            </SmallButton>
            <SmallButton $blue>
              <svg width="12" height="9" viewBox="0 0 12 9" fill="none">
                <path d="M1 1.500h10M1 4.500h10" stroke="#fff" strokeWidth="1.3" strokeDasharray="1.3 .7" />
                <path d="M2 7.500h8" stroke="#fff" strokeWidth="1.3" />
              </svg>
            </SmallButton>
          </OrderColumn>
          <OrderColumn $width={46} $rule>
            <span>Qté</span>
            <QtyInput>2</QtyInput>
          </OrderColumn>
          <OrderColumn $width={33} $rule>
            <span>Limite</span>
            <TicketButton>
              <svg width="20" height="20" viewBox="0 0 20 20" fill="none">
                <path d="M5 1v4M2.5 4L5 7l2.500-3z" stroke="#d01c1c" strokeWidth="1.4" fill="#d01c1c" />
                <path d="M5 17v-5M2.5 12.5L5 9.500l2.500 3z" stroke="#1e9a3a" strokeWidth="1.4" fill="#1e9a3a" />
                <path d="M9 1h6l3 3v6H9zM9 11h10v7H9zM9 14.500h10" stroke="#66757c" strokeWidth="1" fill="#f2f4f5" />
              </svg>
            </TicketButton>
          </OrderColumn>
          <OrderColumn $width={33} $rule>
            <span>Stop</span>
            <TicketButton>
              <svg width="20" height="20" viewBox="0 0 20 20" fill="none">
                <path d="M5 6V2M2.5 4L5 1l2.500 3z" stroke="#1e9a3a" strokeWidth="1.4" fill="#1e9a3a" />
                <path d="M5 10v6M2.5 14L5 17l2.500-3z" stroke="#d01c1c" strokeWidth="1.4" fill="#d01c1c" />
                <path d="M9 1h6l3 3v6H9zM9 11h10v7H9zM9 14.500h10" stroke="#66757c" strokeWidth="1" fill="#f2f4f5" />
              </svg>
            </TicketButton>
          </OrderColumn>
          <OrderColumn $width={83} $pad={3}>
            <LabelRow>
              Vendre <InfoMark $flush>i</InfoMark>
            </LabelRow>
            <PriceButton $color="#e64545">
              14 751,<sup>9</sup>
            </PriceButton>
          </OrderColumn>
          <OrderColumn $width={82}>
            <LabelRow>
              Acheter <InfoMark $flush>i</InfoMark>
            </LabelRow>
            <PriceButton $color="#23ad34">
              14 758,<sup>9</sup>
            </PriceButton>
          </OrderColumn>
          <StopsColumn>
            <StopRow>
              <CheckBox />
              <StopName>L</StopName>
              <PtsInput $width={17}>50</PtsInput>
              <span>pts</span>
            </StopRow>
            <StopRow>
              <CheckBox />
              <StopName>S</StopName>
              <PtsInput $width={22}>100</PtsInput>
              <span>pts</span>
            </StopRow>
          </StopsColumn>
        </OrderPanel>
      </OrderStrip>

      <ChartPanel>
        <Plot>
          <CandleChart />
          <LegendRow>
            <LegendItem $width={17}>
              <svg width="11" height="11" viewBox="0 0 11 11">
                <rect width="11" height="11" fill="#f3f3f3" stroke="#a5b4bb" />
                <path d="M4 1h3v5h2.5L5.500 10 1.500 6H4z" fill="#e0282e" />
              </svg>
            </LegendItem>
            <LegendItem $width={19}>
              <svg width="11" height="11" viewBox="0 0 11 11">
                <rect width="11" height="11" fill="#f3f3f3" stroke="#a5b4bb" />
                <path d="M5.500 1l4 4H7v5H4V5H1.500z" fill="#1e9a3a" />
              </svg>
            </LegendItem>
            <LegendItem $width={35}>
              <Swatch $bg="linear-gradient(90deg, #1f8fd8 50%, #f06a5c 50%)" />
              Prix
            </LegendItem>
            <LegendItem $width={69}>
              <Swatch $bg="#000" />
              Clôture (M)
            </LegendItem>
            {legendItems.map(([label, width]) => (
              <LegendItem key={label} $width={width}>
                <LegendCheck />
                {label}
              </LegendItem>
            ))}
          </LegendRow>
          <DayRange>Jour :+Haut 14 801,8 +Bas 14 644,1</DayRange>
          <Feed>IT-Finance.com - Temps Réel</Feed>
        </Plot>
        <PriceAxis>
          <ChartSvg width={63} height={814} viewBox="1737 122 63 814">
            {priceTicks.map((p) => (
              <g key={p}>
                <line x1="1737" x2="1741" y1={priceY(p)} y2={priceY(p)} stroke="#5a6a72" />
                <ChartText x="1745" y={priceY(p) + 3.5} fontWeight={p % 100 === 0 ? 700 : 400}>
                  {formatPrice(p)}
                </ChartText>
              </g>
            ))}
          </ChartSvg>
          <LastPriceTag>
            14 755,<sup>4</sup>
          </LastPriceTag>
          <GhostTag>,4</GhostTag>
          <TimerTag>1m42s</TimerTag>
        </PriceAxis>
      </ChartPanel>

      <TimeAxis>
        <ChartSvg width={1737} height={16} viewBox="0 0 1737 16">
          {timeTicks.map(([x, label, bold]) => (
            <g key={label}>
              <line x1={x} x2={x} y1="0" y2="3" stroke="#5a6a72" />
              <ChartText x={x} y="12.5" textAnchor="middle" fontWeight={bold ? 700 : 400}>
                {label}
              </ChartText>
            </g>
          ))}
        </ChartSvg>
        <JumpMark>»</JumpMark>
      </TimeAxis>

      <BottomBar>
        <BottomCell $width={30}>
          <MarkerIcon />
        </BottomCell>
        <BottomCell $width={14}>
          <Caret />
        </BottomCell>
        <BottomCell $width={28} $bg="#f4f6f7">
          <MiniChartIcon />
        </BottomCell>
        <BottomCell $width={14} $bg="#c6d6dd">
          <Caret />
        </BottomCell>
        <ShareButton>
          <svg width="14" height="16" viewBox="0 0 14 16" fill="#fff">
            <circle cx="11" cy="3" r="2.5" />
            <circle cx="3" cy="8" r="2.5" />
            <circle cx="11" cy="13" r="2.5" />
            <path d="M3 8l8-5M3 8l8 5" stroke="#fff" strokeWidth="1.2" />
          </svg>
          Partager
        </ShareButton>
        <BottomCell $width={25}>
          <svg width="15" height="16" viewBox="0 0 15 16">
            <rect x="0" y="1" width="7" height="9" fill="#d9e4ea" stroke="#68808e" strokeWidth=".6" />
            <path d="M3 5h12v8H8l-3 3v-3H3z" fill="#1c7ad0" />
            <path d="M6 9h1M9 9h1M12 9h1" stroke="#fff" strokeWidth="1.2" />
          </svg>
        </BottomCell>
        <BottomCell $width={24}>
          <svg width="14" height="16" viewBox="0 0 14 16" fill="none">
            <rect x=".5" y=".5" width="13" height="15" fill="#e7edf0" stroke="#55666e" />
            <path d="M3 4h8M3 8h8M3 12h8" stroke="#222" />
            <path d="M7 2l4 4M3 10l4 4" stroke="#d0282e" />
            <path d="M3 6l3-3" stroke="#1e9a3a" />
          </svg>
        </BottomCell>
        <BottomCell $width={24}>
          <svg width="16" height="17" viewBox="0 0 16 17" fill="none">
            <path d="M8 0v17" stroke="#1e7a2a" />
            <path d="M1 2h6v3H1zM9 5h6v3H9zM1 9h6v3H1zM9 12h6v3H9z" fill="#2fb03a" />
            <path d="M9 1h6v3H9zM1 5h6v3H1z" fill="#e0282e" />
          </svg>
        </BottomCell>
        <BottomCell $width={24}>
          <svg width="17" height="17" viewBox="0 0 17 17" fill="none">
            <rect x=".5" y=".5" width="10" height="8" fill="#d9e4ea" stroke="#1c5a9c" />
            <rect x="5.5" y="6.5" width="11" height="10" fill="#f2f6f8" stroke="#1c5a9c" />
            <path d="M.5 2h10M5.500 8.500h11" stroke="#1c7ad0" strokeWidth="2" />
            <path d="M7 14c2-3 3 1 4-1s2-2 4-1" stroke="#2fa03a" />
          </svg>
        </BottomCell>
        <BottomCell $width={24}>
          <svg width="17" height="18" viewBox="0 0 17 18" fill="none">
            <path d="M12 0v18" stroke="#1e7a2a" />
            <rect x="9" y="3" width="6" height="11" fill="#46c04a" stroke="#1e7a2a" strokeWidth=".6" />
            <path d="M2 17L8 9M6 5a3 3 0 0 0 3 4l2-2-2-1-1-2z" stroke="#222" strokeWidth="1.5" />
            <path d="M4 7l4 5" stroke="#d0282e" strokeWidth="1.5" />
          </svg>
        </BottomCell>
        <BottomCell $width={10}>
          <CollapseMark>«</CollapseMark>
        </BottomCell>
        <ScrollTrack>
          <ScrollArrow $dir="left" />
          <ScrollGap $width={669} />
          <ScrollThumb />
          <ScrollGap />
          <ScrollArrow $dir="right" />
        </ScrollTrack>
        <BottomCell $width={24}>
          <svg width="21" height="18" viewBox="0 0 21 18" fill="none">
            <circle cx="9" cy="7" r="5.5" fill="#e6ecef" stroke="#333" />
            <path d="M13 11l4 5" stroke="#222" strokeWidth="2.4" />
            <path d="M19 1v9M17.500 3L19 1l1.500 2M17.500 8L19 10l1.500-2M1 15h9M3 13.500L1 15l2 1.500M8 13.500L10 15l-2 1.500" stroke="#1433d8" strokeWidth="1.1" />
          </svg>
        </BottomCell>
        <BottomCell $width={24}>
          <svg width="18" height="18" viewBox="0 0 18 18" fill="none">
            <circle cx="7" cy="7" r="5.5" fill="#f0f4f6" stroke="#333" />
            <path d="M11 11l5 5" stroke="#222" strokeWidth="2.4" />
            <path d="M4 7h6" stroke="#123a9c" strokeWidth="1.8" />
          </svg>
        </BottomCell>
        <BottomCell $width={24}>
          <svg width="18" height="18" viewBox="0 0 18 18" fill="none">
            <circle cx="7" cy="7" r="5.5" fill="#f0f4f6" stroke="#333" />
            <path d="M11 11l5 5" stroke="#222" strokeWidth="2.4" />
            <path d="M4 7h6M7 4v6" stroke="#1433d8" strokeWidth="1.8" />
          </svg>
        </BottomCell>
        <BottomCell $width={24}>
          <svg width="17" height="14" viewBox="0 0 17 14" fill="none">
            <path d="M1 2h15" stroke="#333" strokeWidth="2.4" strokeDasharray="2 1" />
            <path d="M8.500 5v5M6 8.500L8.500 13 11 8.500z" fill="#1a6fd8" stroke="#1a6fd8" />
          </svg>
        </BottomCell>
      </BottomBar>

      <Taskbar>
        <TaskIcon $width={45}>
          <TaskWindows />
        </TaskIcon>
        <TaskIcon>
          <TaskSearch />
        </TaskIcon>
        <TaskIcon>
          <TaskView />
        </TaskIcon>
        {taskIcons.map((t) => (
          <TaskIcon key={t.key} $running={t.running} $active={t.active} $width={t.width}>
            {t.node}
          </TaskIcon>
        ))}
        <Clock>
          <ClockTime>23:43</ClockTime>
          30/10/2023
        </Clock>
      </Taskbar>
    </Screen>
  );
}
